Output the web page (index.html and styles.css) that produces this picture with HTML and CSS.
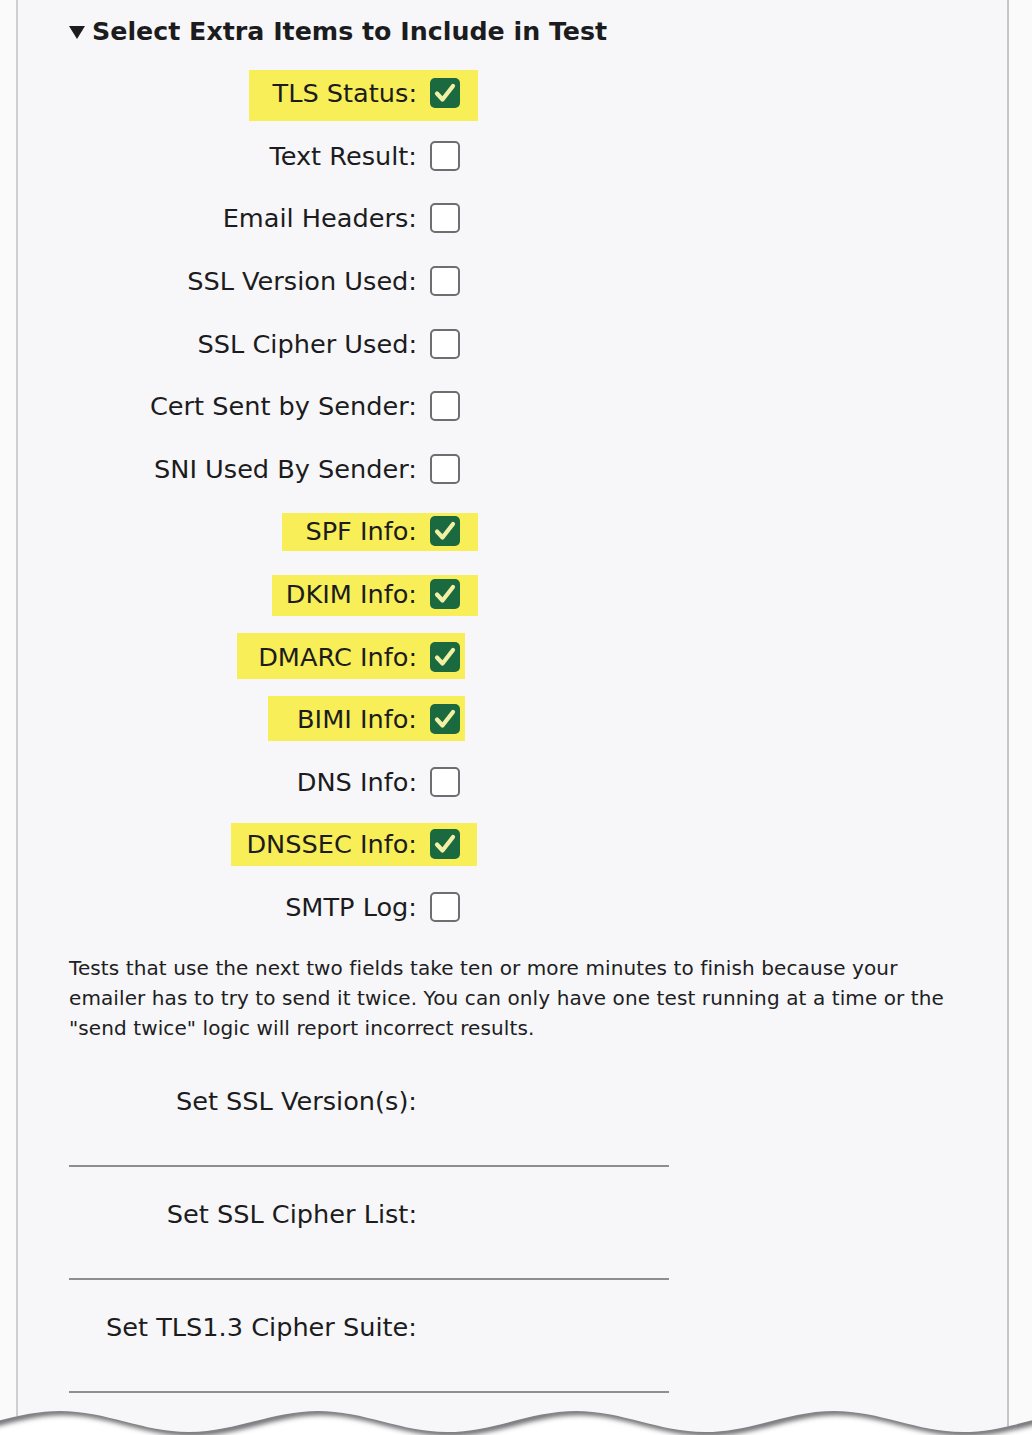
FILE: index.html
```html
<!DOCTYPE html>
<html lang="en">
<head>
<meta charset="utf-8">
<title>Select Extra Items to Include in Test</title>
<link rel="stylesheet" href="styles.css">
</head>
<body>
<div class="screen">
  <div class="page">
    <div class="section-title"><span class="caret"></span>Select Extra Items to Include in Test</div>

    <div class="options">
      <div class="opt hl hl-tls"><span class="opt-label">TLS Status:</span><span class="box checked"><svg viewBox="0 0 30 30" width="30" height="30"><path d="M7 15.5 L12.5 21.5 L23 8" fill="none" stroke="#f1f0a4" stroke-width="4.2" stroke-linecap="round" stroke-linejoin="round"/></svg></span></div>
      <div class="opt"><span class="opt-label">Text Result:</span><span class="box"></span></div>
      <div class="opt"><span class="opt-label">Email Headers:</span><span class="box"></span></div>
      <div class="opt"><span class="opt-label">SSL Version Used:</span><span class="box"></span></div>
      <div class="opt"><span class="opt-label">SSL Cipher Used:</span><span class="box"></span></div>
      <div class="opt"><span class="opt-label">Cert Sent by Sender:</span><span class="box"></span></div>
      <div class="opt"><span class="opt-label">SNI Used By Sender:</span><span class="box"></span></div>
      <div class="opt hl hl-spf"><span class="opt-label">SPF Info:</span><span class="box checked"><svg viewBox="0 0 30 30" width="30" height="30"><path d="M7 15.5 L12.5 21.5 L23 8" fill="none" stroke="#f1f0a4" stroke-width="4.2" stroke-linecap="round" stroke-linejoin="round"/></svg></span></div>
      <div class="opt hl hl-dkim"><span class="opt-label">DKIM Info:</span><span class="box checked"><svg viewBox="0 0 30 30" width="30" height="30"><path d="M7 15.5 L12.5 21.5 L23 8" fill="none" stroke="#f1f0a4" stroke-width="4.2" stroke-linecap="round" stroke-linejoin="round"/></svg></span></div>
      <div class="opt hl hl-dmarc"><span class="opt-label">DMARC Info:</span><span class="box checked"><svg viewBox="0 0 30 30" width="30" height="30"><path d="M7 15.5 L12.5 21.5 L23 8" fill="none" stroke="#f1f0a4" stroke-width="4.2" stroke-linecap="round" stroke-linejoin="round"/></svg></span></div>
      <div class="opt hl hl-bimi"><span class="opt-label">BIMI Info:</span><span class="box checked"><svg viewBox="0 0 30 30" width="30" height="30"><path d="M7 15.5 L12.5 21.5 L23 8" fill="none" stroke="#f1f0a4" stroke-width="4.2" stroke-linecap="round" stroke-linejoin="round"/></svg></span></div>
      <div class="opt"><span class="opt-label">DNS Info:</span><span class="box"></span></div>
      <div class="opt hl hl-dnssec"><span class="opt-label">DNSSEC Info:</span><span class="box checked"><svg viewBox="0 0 30 30" width="30" height="30"><path d="M7 15.5 L12.5 21.5 L23 8" fill="none" stroke="#f1f0a4" stroke-width="4.2" stroke-linecap="round" stroke-linejoin="round"/></svg></span></div>
      <div class="opt"><span class="opt-label">SMTP Log:</span><span class="box"></span></div>
    </div>

    <p class="note">Tests that use the next two fields take ten or more minutes to finish because your emailer has to try to send it twice. You can only have one test running at a time or the "send twice" logic will report incorrect results.</p>

    <div class="fields">
      <div class="field"><label class="field-label">Set SSL Version(s):</label><input class="field-input" type="text"></div>
      <div class="field"><label class="field-label">Set SSL Cipher List:</label><input class="field-input" type="text"></div>
      <div class="field"><label class="field-label">Set TLS1.3 Cipher Suite:</label><input class="field-input" type="text"></div>
    </div>
  </div>

  <svg class="tear" viewBox="0 0 1032 40" width="1032" height="40">
    <defs>
      <clipPath id="below">
        <path d="M-69,37 C-23,37 14,16 60,16 C106,16 143,37 189,37 C235,37 272,16 318,16 C364,16 401,37 447,37 C493,37 530,16 576,16 C622,16 659,37 705,37 C751,37 788,16 834,16 C880,16 917,37 963,37 C1009,37 1046,16 1092,16 L1092,60 L-69,60 Z"/>
      </clipPath>
      <filter id="soft" x="-5%" y="-200%" width="110%" height="500%">
        <feGaussianBlur stdDeviation="2.6"/>
      </filter>
    </defs>
    <path d="M-69,37 C-23,37 14,16 60,16 C106,16 143,37 189,37 C235,37 272,16 318,16 C364,16 401,37 447,37 C493,37 530,16 576,16 C622,16 659,37 705,37 C751,37 788,16 834,16 C880,16 917,37 963,37 C1009,37 1046,16 1092,16 L1092,60 L-69,60 Z" fill="#ffffff"/>
    <g clip-path="url(#below)">
      <path d="M-69,37 C-23,37 14,16 60,16 C106,16 143,37 189,37 C235,37 272,16 318,16 C364,16 401,37 447,37 C493,37 530,16 576,16 C622,16 659,37 705,37 C751,37 788,16 834,16 C880,16 917,37 963,37 C1009,37 1046,16 1092,16" transform="translate(3,0.5)" fill="none" stroke="#6a6a6e" stroke-width="7" filter="url(#soft)"/>
    </g>
  </svg>
</div>
</body>
</html>
```

FILE: styles.css
```css
html, body {
  margin: 0;
  padding: 0;
}

body {
  background: #fafafb;
  font-family: "DejaVu Sans", Verdana, sans-serif;
  color: #1c1c1e;
}

.screen {
  position: relative;
  width: 1032px;
  height: 1435px;
  overflow: hidden;
  background: #fafafb;
}

.page {
  box-sizing: border-box;
  margin-left: 16px;
  width: 993px;
  height: 1435px;
  padding: 17px 48px 0 51px;
  background: #f7f7f9;
  border-left: 2px solid #cfcfd3;
  border-right: 2px solid #c6c6ca;
}

.section-title {
  display: flex;
  align-items: center;
  font-weight: bold;
  font-size: 25.3px;
  line-height: 30px;
  margin: 0 0 15px;
  white-space: nowrap;
}

.caret {
  width: 0;
  height: 0;
  border-left: 8px solid transparent;
  border-right: 8px solid transparent;
  border-top: 13px solid #1c1c1e;
  margin-right: 7px;
}

.options {
  display: flex;
  flex-direction: column;
}

.opt {
  position: relative;
  display: flex;
  align-items: center;
  height: 62.6px;
}

.opt-label {
  position: relative;
  z-index: 1;
  width: 348px;
  margin-right: 13px;
  text-align: right;
  font-size: 25.6px;
  white-space: nowrap;
}

.box {
  position: relative;
  z-index: 1;
  box-sizing: border-box;
  width: 30px;
  height: 30px;
  border: 2px solid #6e6e72;
  border-radius: 5px;
  background: #ffffff;
}

.box.checked {
  border: 0;
  background: #1b6a3f;
}

.box svg {
  display: block;
}

.hl::before {
  content: "";
  position: absolute;
  z-index: 0;
  left: var(--hl-left);
  width: var(--hl-width);
  top: calc(50% - var(--hl-up));
  height: var(--hl-height);
  background: #f8ee57;
}

.hl-tls    { --hl-left: 180px; --hl-width: 229px; --hl-up: 23px; --hl-height: 51px; }
.hl-spf    { --hl-left: 213px; --hl-width: 196px; --hl-up: 18px; --hl-height: 38px; }
.hl-dkim   { --hl-left: 203px; --hl-width: 206px; --hl-up: 19px; --hl-height: 41px; }
.hl-dmarc  { --hl-left: 168px; --hl-width: 228px; --hl-up: 24px; --hl-height: 46px; }
.hl-bimi   { --hl-left: 199px; --hl-width: 197px; --hl-up: 23px; --hl-height: 45px; }
.hl-dnssec { --hl-left: 162px; --hl-width: 246px; --hl-up: 21px; --hl-height: 43px; }

.note {
  margin: 14.6px 0 30px;
  font-size: 20px;
  line-height: 30px;
  letter-spacing: 0.1px;
  color: #202022;
}

.fields {
  display: flex;
  flex-direction: column;
}

.field {
  display: flex;
  flex-direction: column;
}

.field-label {
  display: flex;
  align-items: center;
  justify-content: flex-end;
  width: 348px;
  height: 56px;
  font-size: 25.6px;
  white-space: nowrap;
}

.field-input {
  display: block;
  box-sizing: border-box;
  width: 600px;
  height: 38px;
  margin: 0 0 19px;
  padding: 0;
  border: 0;
  border-bottom: 2px solid #8e8e92;
  background: transparent;
  outline: none;
}

.tear {
  position: absolute;
  left: 0;
  bottom: 0;
  display: block;
}
```
